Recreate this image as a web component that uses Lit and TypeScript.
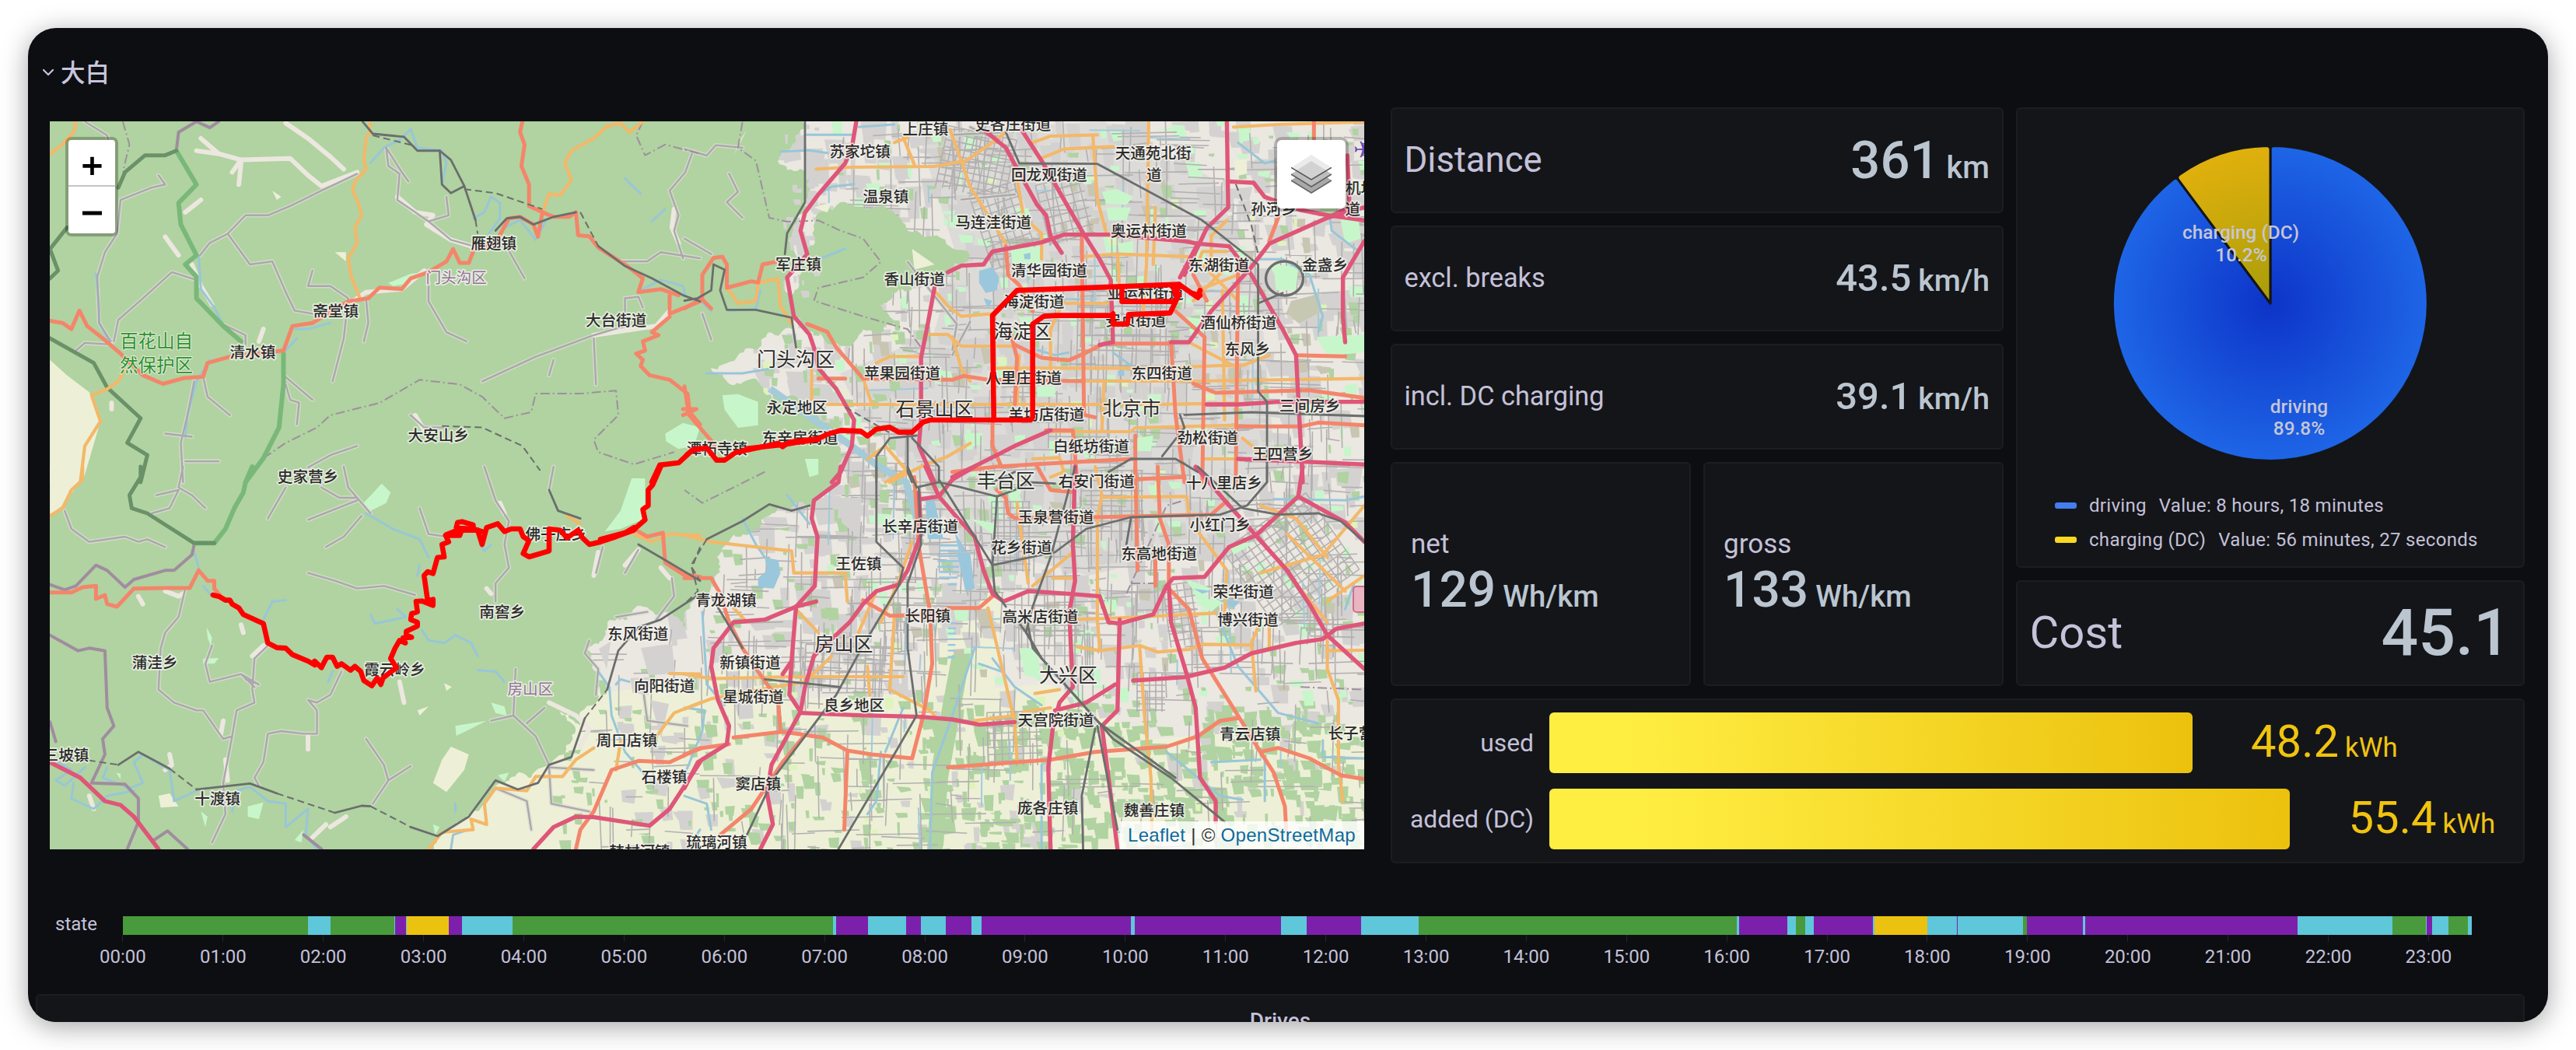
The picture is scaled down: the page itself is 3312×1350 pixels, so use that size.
import { LitElement, html, svg, css } from "lit";
import { customElement, property } from "lit/decorators.js";

type Pt = [number, number];
type Kind = "M" | "T" | "O" | "R" | "D" | "G" | "W" | "V" | "P" | "A" | "N" | "E";

/** The map is digitised in four sheets, each with its own offset and scale. */
interface Sheet {
  tx: number;
  ty: number;
  sx: number;
  sy: number;
  lines: Partial<Record<Kind, string[]>>;
  parks: string[];
  fields: string[];
  lakes: string[];
  labels: [string, number, number, string?][];
}

const S = 900 / 1568;

const SHEETS: Sheet[] = [
  {
    tx: 0, ty: 0, sx: S, sy: 620 / 1568,
    lines: {
      E: ["450,450 490,500 540,520 650,515 690,570 720,605 800,560", "540,520 520,560", "540,530 535,600", "490,500 440,490", "640,400 690,450 740,510 770,550", "890,640 930,690 970,700 955,730 1010,780 1055,800", "430,860 450,930 475,990", "770,1000 820,950 900,940 950,880", "1510,680 1505,740 1520,790", "370,770 400,830", "1500,1010 1470,1060 1330,1090", "415,690 450,650", "590,1070 580,1110", "250,1310 250,1330", "930,1350 950,1400"],
      O: ["112,500 140,470 165,430 170,395", "830,395 828,430 820,450 815,520 820,550 795,590 790,620 800,650 810,700 795,740 800,790 780,840 787,900 805,965", "1440,395 1410,430 1390,400 1360,410 1330,450 1280,490 1265,530 1280,585 1255,635 1230,630 1218,680", "280,1200 265,1240 240,1265 205,1285 225,1370 190,1450 180,1568"],
      T: ["112,1043 140,1050 160,1070 178,1010 195,1060 230,1100 270,1150 320,1220 365,1248 410,1230 455,1225 465,1180 515,1160 635,1140 655,1060 700,1050 780,980 825,970 850,935 900,940 920,905 960,885 1000,850 1015,810 1030,855 1050,855 1062,810 1110,790 1140,710 1165,705 1195,730 1205,770 1215,690 1240,705 1275,705 1290,690 1295,765 1320,768 1340,805 1400,860 1440,905 1430,950 1480,940 1520,960", "1170,395 1165,430 1175,470 1168,540 1185,600 1185,670 1215,690", "1500,960 1500,1020 1568,980", "1500,1030 1460,1080 1475,1090 1440,1110 1445,1140 1425,1150 1440,1170 1435,1190 1455,1220 1500,1235 1540,1280 1545,1340 1568,1380", "1530,1330 1560,1330 1530,1350"],
      R: ["812,395 835,435 905,445 935,490 985,490 1010,520 1040,605 1065,715", "985,490 990,600 1010,628 1040,605", "1110,750 1135,710 1165,705 1195,730 1240,705 1290,690", "1340,800 1400,865 1460,905 1530,960 1568,980"],
      D: ["835,440 930,475", "1040,615 1110,628 1215,680", "1300,690 1340,800", "1065,715 1070,760", "990,1385 1080,1390 1170,1450 1210,1530"],
      W: ["830,530 860,480 895,455 920,420 935,480 990,490 1000,530 990,600", "1060,710 1085,690 1100,640 1120,660 1120,710 1095,760", "245,1110 222,1050 222,1000 215,890", "445,830 450,940 480,1000 500,1055", "415,1420 420,1350 440,1240 470,1170", "660,1070 690,1070 740,1050", "1400,580 1435,630", "1130,740 1165,715 1200,780 1222,720", "1440,940 1480,910 1530,930 1535,960", "640,1140 665,1100", "1460,720 1490,680"],
      G: ["255,1110 265,1040 320,970 385,885 440,910", "248,1110 222,1050 218,900 235,820 262,760 270,650 340,610 370,600 355,570", "448,830 470,790 510,760 550,700 600,700 650,670 720,620 800,565", "510,760 560,860 610,850 640,950 660,1010 700,1020", "865,480 870,540 895,565 890,650 960,720 1010,780 1060,800", "700,880 690,930 740,930 780,970 770,1100 745,1240", "960,920 960,980 1000,1080 1045,1110", "1440,1000 1430,965 1400,970 1400,1060 1330,1090 1200,1160 1080,1240", "820,970 825,1050 815,1110", "500,1055 550,1090 550,1120", "410,1568 405,1440 420,1350 435,1240", "640,1250 650,1300 670,1310 665,1380", "635,1220 700,1300", "1550,500 1535,560 1500,620 1520,700 1510,750 1530,840", "170,1140 190,1115 250,1120", "455,1225 465,1290 515,1350", "1390,850 1450,850 1480,820 1568,840", "865,480 900,560 915,590", "1000,640 1005,700 960,720", "1130,790 1175,905", "1240,1170 1230,1220", "1330,1100 1335,1250", "690,1520 740,1480 800,1450", "920,1350 950,1390 1000,1390", "190,395 240,440 250,500", "370,1410 430,1420", "415,1500 490,1500"],
      V: ["490,395 470,415 440,395 400,430 395,490"],
      A: ["590,1490 640,1440 710,1390 740,1350 850,1310 940,1235 1030,1250 1080,1290 1130,1360 1190,1340 1200,1280 1300,1280 1380,1270 1385,1350 1330,1430 1340,1470 1420,1510 1510,1470", "1440,395 1425,440 1445,505 1490,470 1568,500", "275,395 290,470 275,560"],
      N: ["395,490 370,505 325,505 280,560 265,610", "150,740 112,810 130,880 112,905", "112,1100 210,1180 240,1260 315,1360 285,1440 330,1480 315,1568"],
      P: ["395,490 440,600 400,660 405,730 440,830 415,860 440,900 440,970 500,1060 540,1110", "635,1150 635,1250 625,1390 590,1490 550,1568"],
    },
    parks: ["870,920 920,890 950,885 905,925 880,930", "1490,1410 1530,1375 1568,1390 1555,1450 1520,1460 1492,1435"],
    fields: ["112,1170 150,1220 200,1275 225,1370 185,1568 112,1568", "750,820 775,820 775,850", "610,620 630,640 620,650"],
    lakes: [],
    labels: [["雁翅镇", 1106, 792], ["斋堂镇", 752, 1012], ["清水镇", 566, 1145], ["大台街道", 1380, 1042], ["大安山乡", 982, 1416], ["史家营乡", 690, 1551], ["门头沟区", 1022, 903, "district"], ["百花山自", 350, 1108, "reserve"], ["然保护区", 350, 1188, "reserve"]],
  },
  {
    tx: 880, ty: 140, sx: S, sy: 1 / 3,
    lines: {
      G: ["0,155 50,180 70,140 130,150", "100,250 120,320 95,360 130,420", "40,790 60,890", "640,70 700,120", "600,100 720,90", "500,590 610,830 600,930", "0,500 60,560", "620,350 740,330", "640,820 600,950"],
      O: ["295,232 370,225 560,222 630,200 690,130 720,90", "490,110 515,215", "470,130 500,110", "595,80 620,200 640,300 720,520", "780,130 820,105 925,100", "800,190 850,155 960,145", "740,220 760,420 800,480 800,580", "915,105 925,350 945,480", "1040,48 1035,600 1025,840", "890,570 970,560 1130,570", "690,1000 1060,1000 1200,990 1250,990 1310,950", "890,1050 1140,1050 1523,1040", "320,1140 1050,1140 1240,1135", "430,980 460,955 530,955", "550,870 590,870 620,915 740,915", "820,1245 1000,1245 1010,1230 1240,1220", "1150,600 1160,550 1215,550", "1150,700 1240,640", "1160,600 1240,740", "1220,600 1140,740", "1230,70 1330,60 1523,50", "1215,430 1180,490 1180,600", "855,750 950,750", "850,740 820,850 820,1050", "285,1000 285,1120", "1205,700 1210,1200", "940,1050 935,1240", "1055,380 1050,600", "560,700 590,760 620,800 690,790", "600,880 620,1000 640,1050", "165,670 210,655 215,760 240,830", "95,690 120,750 160,740 165,670", "400,1040 420,1140", "460,1440 530,1380 590,1340 640,1290", "780,1350 840,1345 850,1400 820,1420", "1160,1350 1300,1350", "1250,1270 1300,1340", "1130,900 1240,1000", "970,560 975,700", "410,1350 450,1300 500,1400 520,1440", "750,950 745,1140"],
      T: ["0,770 40,730 40,640 65,575 85,570 95,600 95,690 150,665 165,670 175,600 205,590", "275,830 320,860 340,920 400,1040 600,1045 625,1030 680,1045 890,1050", "40,735 60,770", "720,530 725,640 750,680 780,780", "890,480 895,1180 920,1190", "740,910 800,960 860,970 900,940 940,905 1090,905", "1100,780 1165,880 1160,1440", "1240,600 1235,1440", "1410,50 1410,130", "1330,420 1310,510", "1140,1060 1190,1095 1300,1090 1400,1085 1523,1115", "1240,1225 1380,1225 1420,1210 1523,1220", "1370,950 1480,955", "0,1070 10,1180 60,1280 70,1310", "690,1200 690,1300 710,1380", "600,1400 700,1380 790,1370 900,1360 1010,1350", "1090,900 1100,1180 1120,1440", "810,1240 870,1240 880,1440", "1140,640 1170,740", "725,830 745,960 740,1140", "1010,1260 1010,1440", "300,1040 360,1040"],
      R: ["720,90 750,210 925,212 1160,430 1285,600 1285,1090 1305,1130 1305,1440", "0,740 30,730 60,700 65,600 90,620 80,700 95,775 160,775 240,805 250,920", "1120,1180 1270,1170 1523,1185", "950,1400 1000,1350 1100,1350 1150,1400", "1070,1340 1120,1230 1110,1180", "430,1440 430,1340 460,1270 520,1260", "500,1260 500,1400 510,1440", "510,1270 570,1380 570,1440", "270,50 270,360 230,480 225,560", "690,1440 740,1400", "1285,750 1340,710"],
      D: ["1235,290 1270,450 1285,560", "360,1150 460,1250"],
      M: ["385,48 375,150 360,210 300,330 270,400 260,470 275,560 230,650 245,800 280,870 290,920 300,1000 340,1080 380,1200 375,1300 350,1400 330,1440", "670,80 720,150 745,230 790,370 810,410 820,490 845,555", "755,80 800,200 890,470 930,580 955,660 960,900 930,910", "590,630 620,605 670,600 690,550 800,515 850,485 950,485 1120,510 1150,520 1220,530 1270,640 1340,850 1370,950 1385,1440", "1215,48 1218,380 1170,460 1120,640", "1220,280 1275,285 1300,340 1380,390 1440,410 1523,430", "1523,380 1440,420 1310,520 1270,610 1180,780 1130,900 1090,900", "1523,510 1475,650 1475,800 1480,900", "1485,180 1490,380 1440,420", "560,690 545,830 530,960 530,1200 525,1300 560,1440", "1170,1140 1240,1140 1330,1130 1523,1130", "600,1420 660,1370 740,1300 820,1240", "1240,1350 1380,1360 1523,1372", "1110,650 1150,520"],
      A: ["130,50 120,150 160,200 190,420 230,435 300,430 350,470 400,500 440,590 400,650 300,690 290,740 400,800 500,850 530,920"],
      W: ["215,165 280,160 320,170", "270,100 380,100", "300,330 330,300 380,290", "1280,580 1340,580 1400,640 1430,800 1420,860", "1445,410 1450,470 1510,550", "300,580 360,540", "50,1020 130,1020 200,1000", "790,930 830,950 860,940", "1240,130 1300,210 1320,200", "30,730 60,780", "100,780 160,770 170,700", "960,940 1000,990", "390,70 470,60"],
    },
    parks: ["935,320 970,310 1005,340 990,370 945,365", "85,1105 120,1100 165,1130 165,1220 120,1230 90,1160", "270,1350 300,1350 300,1410 280,1420", "730,540 800,530 800,600 735,595", "970,520 1005,510 1005,560 980,570", "1470,430 1510,420 1515,500 1480,520", "1320,600 1375,610 1370,700 1325,700", "1415,880 1523,870 1523,940 1440,950", "945,380 1000,380 990,430 950,430", "1010,1270 1050,1260 1045,1320 1012,1320", "790,1070 830,1070 830,1110 790,1110"],
    fields: ["1230,200 1260,195 1260,250 1235,260", "510,540 560,600 515,620", "290,380 330,360 320,400", "140,80 110,180 125,120"],
    lakes: ["660,625 690,610 705,650 700,700 675,710 660,670", "970,1010 985,1005 985,1030 972,1030", "760,560 775,555 775,580 762,580", "670,730 690,740 680,770"],
    labels: [["上庄镇", 540, 77], ["史各庄街道", 736, 60], ["苏家坨镇", 393, 165], ["温泉镇", 451, 340], ["回龙观街道", 817, 255], ["天通苑北街", 1050, 170], ["道", 1052, 255], ["马连洼街道", 692, 437], ["奥运村街道", 1040, 472], ["东湖街道", 1197, 602], ["金盏乡", 1435, 604], ["孙河乡", 1320, 388], ["机场", 1515, 305], ["道", 1497, 388], ["军庄镇", 255, 600], ["香山街道", 515, 658], ["清华园街道", 817, 625], ["亚运村街道", 1033, 712], ["海淀街道", 783, 743], ["安贞街道", 1011, 815], ["海淀区", 757, 857, "city"], ["酒仙桥街道", 1241, 825], ["东风乡", 1261, 927], ["门头沟区", 249, 965, "city"], ["苹果园街道", 488, 1020], ["八里庄街道", 760, 1038], ["东四街道", 1069, 1020], ["石景山区", 560, 1157, "city"], ["北京市", 1002, 1152, "city"], ["永定地区", 252, 1153], ["羊坊店街道", 811, 1180], ["三间房乡", 1401, 1145], ["东辛房街道", 259, 1270], ["潭柘寺镇", 73, 1312], ["劲松街道", 1172, 1270], ["白纸坊街道", 911, 1302], ["王四营乡", 1340, 1332]],
  },
  {
    tx: 0, ty: 600, sx: S, sy: 1 / 3,
    lines: {
      E: ["540,610 545,640", "590,690 565,730", "370,480 400,500 410,490", "310,500 320,530", "500,980 495,1030", "690,1040 690,1090", "505,1130 510,1210", "380,1110 385,1150 370,1170", "730,1380 700,1430", "775,1350 740,1390", "895,830 905,910", "1230,910 1290,960 1320,1010 1300,1080", "1340,330 1330,420", "1400,380 1430,320", "1480,390 1500,430", "200,1270 210,1320", "1120,140 1130,180", "1090,470 1100,490"],
      G: ["415,470 400,580 370,640 360,700 355,860 390,910 440,940 455,940 500,1050 520,1040 500,1220 505,1340 475,1450", "600,690 570,740 565,860 570,910 530,940 520,1040", "475,690 460,760 470,830 540,800 570,850", "765,790 740,880 710,910 690,900 710,940 710,1030 680,1030 630,1020 600,1030 590,1140 570,1200 580,1230", "820,1050 860,1150 870,1210 835,1300", "870,1210 920,1155", "1085,0 1110,130 1140,210 1130,300 1140,390 1110,450 1110,520", "1155,780 1150,960 1200,1040 1230,1150", "940,160 960,260 1000,270", "690,410 750,440 800,470 860,460 930,495", "770,0 780,80 830,180", "640,80 620,140 600,200", "720,80 760,120 800,120", "690,205 800,130", "810,190 770,270 730,310", "145,170 160,240 200,290 280,270 310,290 330,280 370,310", "410,0 400,80 430,110 460,160", "400,90 380,160 340,180", "400,90 350,110", "1505,430 1510,500 1470,590", "1240,0 1230,90", "1350,310 1335,410", "1430,320 1400,410", "1320,670 1310,720 1340,780 1335,880", "1150,960 1100,980", "1180,990 1220,930", "1380,580 1450,560", "1110,1240 1180,1290 1190,1400", "1230,1160 1235,1300 1320,1330", "1330,1170 1230,1160", "1440,850 1450,980 1540,1000", "540,800 580,840 550,820"],
      O: ["185,0 185,50 160,90 140,160 112,190", "960,1475 990,1410 1060,1400 1055,1360 1090,1380 1085,1300 1110,1240 1180,1250 1200,1195 1260,1195 1290,1130 1330,1085", "1390,1060 1380,1170", "1470,1040 1510,950 1568,910", "1500,798 1568,800", "1420,260 1460,290 1500,260 1568,265", "1270,190 1300,220"],
      T: ["112,485 160,485 185,465 215,460 215,510 235,495 240,530 262,540 300,470 370,468 425,468 445,400 465,440 480,440 480,470 492,495", "1430,250 1450,270 1485,255 1490,370 1530,415 1568,425", "1290,1475 1300,1400 1330,1330 1370,1170 1430,1135 1500,1140 1568,1085"],
      R: ["265,1150 310,1100 380,1165", "440,1245 560,1222 620,1260", "750,1335 810,1308 830,1310", "920,1390 980,1425 1050,1350 1110,1210 1160,1245 1205,1220 1230,1150 1280,1120 1310,970", "1360,860 1385,710 1430,620 1480,590 1560,500", "1230,90 1250,170 1300,200", "1430,300 1480,350 1568,440"],
      D: ["150,1120 265,1150", "380,1165 440,1245", "620,1260 750,1335", "830,1310 920,1390", "1310,970 1360,860", "1568,310 1550,390 1568,440"],
      M: ["112,1140 180,1200 235,1290 270,1305 300,1350 355,1475", "1195,1475 1240,1390 1290,1350 1330,1352 1455,1385 1500,1320 1568,1140"],
      V: ["112,455 145,475 170,460 215,380 240,400 280,465 300,435 370,400 390,400 430,340 435,300", "112,650 175,710 200,700 235,710 240,930 255,1000 230,1050 235,1110 205,1220 280,1225 310,1280 310,1370 285,1475", "345,1440 375,1405 420,1475", "680,1420 720,1475", "112,985 125,1060"],
      N: ["315,0 315,40 290,110 295,160 330,180 435,295 480,295"],
      P: ["435,295 480,295 505,240 525,160 545,100 550,60 565,0"],
      W: ["130,1140 160,1170 125,1210 145,1230 190,1160", "240,1160 230,1200 290,1240 320,1220 300,1140 320,1110 380,1170 390,1290 440,1250", "160,1280 165,1220", "160,1280 210,1320 240,1270 300,1250", "520,1330 530,1250 560,1235 600,1290 640,1300 640,1390 690,1320 685,1420 710,1475", "590,590 610,520 640,515", "830,570 840,605 910,580 890,550", "945,630 960,670 995,680 1020,650 1055,680 1070,730", "1070,785 1110,790 1130,830", "820,180 880,240 940,280 960,350", "1075,300 1085,325 1100,300", "1340,790 1365,850 1370,960 1400,1100 1450,1200", "435,330 445,390", "455,460 470,490", "745,790 735,830", "940,380 935,420", "1020,1300 1020,1330", "1380,840 1390,820 1410,830", "1540,1475 1568,1400", "1010,1475 1015,1420 1050,1400"],
    },
    parks: ["855,65 875,100 865,140 825,175 812,145", "1415,45 1445,45 1445,200 1390,240 1355,250 1390,170", "463,620 475,660 472,690 465,660", "455,740 490,738 480,760 455,760", "555,1310 590,1295 580,1360 555,1350", "1020,1000 1090,980 1050,1015 1022,1038", "1100,910 1130,925 1135,960 1110,950", "1115,1190 1140,1180 1130,1215", "260,1180 270,1185 270,1205", "450,1330 465,1350 460,1390", "970,1380 985,1390 975,1420", "660,1440 680,1400 675,1450"],
    fields: ["1010,1080 1050,1110 1040,1170 1000,1255 970,1220 990,1130", "995,835 1012,850 1000,865", "355,1270 380,1260 400,1310 360,1315", "112,0 185,0 170,80 140,150 112,185", "935,940 960,925 940,960"],
    lakes: [],
    labels: [["佛子庄乡", 1245, 262], ["南窖乡", 1125, 560], ["东风街道", 1429, 645], ["向阳街道", 1488, 847], ["霞云岭乡", 884, 783], ["房山区", 1188, 857, "district"], ["蒲洼乡", 347, 755], ["周口店镇", 1404, 1057], ["石楼镇", 1488, 1197], ["三坡镇", 148, 1113], ["十渡镇", 487, 1280], ["韩村河镇", 1433, 1484]],
  },
  {
    tx: 880, ty: 600, sx: S, sy: 1 / 3,
    lines: {
      O: ["0,265 60,290 110,300 240,325 245,410 360,410 365,520", "745,140 770,450", "920,0 935,110 925,200 925,590 930,700", "935,118 1125,115 1130,190", "680,545 740,985 745,1130", "0,800 60,818 240,810 490,810", "410,770 415,880", "470,580 460,860 550,940 560,960", "650,980 740,960", "870,590 950,585 1190,565", "880,695 930,710 1020,690 1060,715 1130,705 1160,685 1270,688", "1150,250 1215,400 1210,560", "1290,150 1370,200 1440,350", "1523,150 1430,340 1290,410", "1350,260 1480,480", "1290,600 1270,680 1280,865", "1440,650 1440,780 1465,900 1465,1150 1475,1290", "1020,700 1030,950 1045,1200 1048,1475", "250,550 300,640", "0,935 60,895 200,850 270,830 330,730", "870,330 780,460", "430,480 390,640", "510,290 480,440 440,600", "1440,520 1523,420", "1360,430 1440,600", "785,875 840,860", "820,930 760,945", "1440,710 1523,708", "450,60 500,10", "825,430 875,430", "1310,600 1310,700", "110,545 140,600"],
      T: ["515,40 525,310 550,560 555,760 535,960 510,1125 420,1110 365,1095 310,1045 220,1022 110,1045", "365,1095 358,1400", "0,1110 40,1085 100,1070", "590,1160 820,1130 920,1100 1080,1080 1150,1040 1200,980 1240,970", "1010,0 1015,400", "1060,0 1065,200 1085,300 1085,470 1130,550 1160,740 1240,960 1290,1100 1320,1180 1345,1310 1348,1400", "1290,1100 1330,1085 1400,1125 1470,1190 1523,1205", "700,90 720,120 725,180 740,198 920,195 1180,185 1210,140", "400,515 460,575 560,570 590,545 660,545 690,500", "0,430 60,430 80,490 100,600 130,700 165,790 210,900 215,1020", "265,1045 220,1140 150,1320 80,1420", "790,0 820,90 870,98", "1015,48 1120,40", "1055,330 1055,460"],
      R: ["500,0 520,80 570,60 620,80 700,115 740,90 770,60 830,65", "430,0 430,290 490,390 480,460 400,690 340,880 200,1200 140,1420", "525,80 530,300 500,450 500,700 520,960 480,1080 345,1475", "570,50 690,380 695,480 720,540", "700,120 690,380 830,330 900,240 1000,195 1200,185 1260,150 1305,60 1305,0", "875,0 820,350 780,540 765,640 800,740 930,990 960,1050 1090,1200 1210,1370", "748,600 770,650 800,740", "768,600 780,700 930,990 1100,1200", "920,1010 890,1270 893,1475", "1150,0 1250,160 1330,185 1420,180 1470,210 1523,290", "50,280 130,210 190,145 240,170 280,150", "1000,200 990,300", "180,820 350,850", "60,500 130,700", "925,1000 970,1400"],
      D: ["50,280 15,380 30,480 0,530"],
      M: ["350,0 345,60 290,130 285,200 298,270 292,460 250,540 180,590 110,600 65,700 60,770 75,900 100,1000 95,1070 30,1140 0,1240", "295,520 250,540", "250,540 240,750 220,800", "240,750 235,880 260,945 195,1150 185,1260 198,1380 170,1475", "260,950 380,958 530,965 600,975 660,995 740,985", "830,940 900,910 965,840", "650,0 600,50 570,115 530,125", "525,100 530,260 500,400 480,455 430,480 400,530 370,600 290,730 270,850 260,945", "540,0 570,115 610,195 650,270 670,400 690,490 715,520 770,480 860,490 930,500 950,600 975,605 1050,570 1080,460 1095,430 1165,425 1220,310 1280,265 1375,115 1385,0", "875,0 870,300 875,440 862,560 870,850 840,910 825,1010 815,1160 820,1475", "975,590 970,940 935,1000 950,1200 970,1475", "1145,0 1210,130 1280,265 1350,400 1400,530 1440,650 1523,780", "1375,115 1480,215 1523,290", "1085,460 1090,600 1125,800 1145,930 1155,1200 1190,1290 1190,1370", "1005,825 1120,812 1210,775 1270,720 1370,680 1430,665 1460,625 1523,605"],
      W: ["0,930 45,940 40,1020 0,1190", "690,740 740,850 800,920", "1190,560 1240,770 1330,950 1420,990", "1080,1100 1200,1270 1250,1285", "1430,1055 1430,1120 1523,1125", "1320,125 1480,130 1523,115", "650,700 600,960 555,1180 550,1475", "660,760 710,790", "0,1270 50,1300 60,1400", "440,1100 430,1290 410,1340", "490,930 450,1100", "1290,1130 1180,1140", "130,200 160,300 180,350", "230,110 280,220", "1480,550 1500,450", "800,1150 800,1475", "1300,1130 1300,1290", "40,560 50,840 90,920"],
      V: [],
      A: ["180,20 40,140 0,90", "1000,450 1060,450", "1380,850 1523,860", "990,490 1080,150 1120,130"],
    },
    parks: ["750,700 790,700 800,830 760,790", "1120,430 1180,470 1150,500", "1140,520 1220,500 1180,560", "1220,300 1280,290 1230,340", "890,150 870,230 890,200", "640,200 700,220 690,260"],
    fields: ["640,0 650,0 650,10"],
    lakes: ["180,350 210,360 215,410 200,470 165,465 165,430 185,400", "540,130 560,130 580,280 545,280", "610,330 640,330 650,470 630,480", "605,250 630,320 615,330", "570,300 612,300 612,308 570,308", "570,320 612,320 612,328 570,328", "567,340 615,340 615,348 567,348", "567,360 615,360 615,368 567,368", "567,382 615,382 615,390 567,390", "570,402 615,402 615,410 570,410", "570,424 612,424 612,432 570,432", "590,450 610,450 610,458 590,458", "592,600 608,600 608,607 592,607", "590,620 608,620 608,627 590,627", "590,640 608,640 608,647 590,647", "590,662 607,662 607,669 590,669", "590,684 607,684 607,691 590,691", "590,706 606,706 606,713 590,713", "590,730 606,730 606,740 590,740", "1140,470 1180,480 1160,490", "1190,510 1245,520 1230,545"],
    labels: [["丰台区", 720, 52, "city"], ["右安门街道", 923, 58], ["十八里店乡", 1209, 62], ["玉泉营街道", 832, 195], ["长辛店街道", 528, 232], ["小红门乡", 1200, 224], ["花乡街道", 755, 312], ["东高地街道", 1063, 335], ["王佐镇", 390, 375], ["青龙湖镇", 93, 517], ["长阳镇", 545, 577], ["高米店街道", 797, 578], ["荣华街道", 1252, 482], ["博兴街道", 1262, 592], ["房山区", 357, 682, "city"], ["新镇街道", 147, 756], ["大兴区", 860, 802, "city"], ["星城街道", 154, 888], ["良乡地区", 380, 922], ["天宫院街道", 832, 977], ["青云店镇", 1267, 1032], ["长子营镇", 1510, 1030], ["窦店镇", 165, 1225], ["庞各庄镇", 814, 1318], ["魏善庄镇", 1052, 1325], ["琉璃河镇", 72, 1450]],
  },
];

const ROUTE: [number, string[]][] = [
  [2, ["477,495 490,500 505,515 515,515 520,530 535,545 545,570 590,605 600,680 620,698 640,700 655,725 690,750 705,765 705,750 720,775 732,735 745,735 755,770 765,760 785,785 795,770 808,790 815,825 833,845 845,815 853,840 858,815 888,775 875,740 885,700 895,670 908,680 903,660 922,658 910,650 910,635 935,615 935,600 920,590 922,567 935,560 932,520 945,518 970,535 970,512 958,518 950,420 958,405 970,412 980,350 995,348 990,300 1005,290 998,265 1030,265 1035,240 1022,235 1025,215 1035,212 1060,225 1060,245 1030,245 1070,245 1080,300 1090,235 1115,220 1130,250 1145,240 1165,240 1172,270 1185,285 1172,335 1185,348 1230,325 1230,240 1255,245 1270,275 1295,245 1305,275 1320,300 1345,290 1380,270 1420,245 1425,235 1445,205 1440,165 1452,150 1452,90 1462,70 1480,0", "1345,280 1400,255 1420,235", "1000,262 1035,238 1060,240 1080,250"]],
  [0, ["1460,1568 1478,1512 1520,1505 1550,1465 1568,1460"]],
  [1, ["5,1335 20,1313 50,1308 72,1355 90,1355 115,1325 210,1290 220,1303 235,1285 300,1272 320,1255 350,1240 395,1243 410,1262 430,1235 460,1228 480,1247 510,1247 535,1208 550,1200 775,1200 780,1190 780,830 805,800 830,797 955,797 960,790 960,830 992,830 995,793 1088,787 1108,715 1098,743 980,743 980,685", "693,1200 690,797 745,700 1108,677 1150,728 1155,700", "1108,677 1100,720 1095,685 1108,677", "140,1310 220,1295 300,1275", "1135,710 1155,720"]],
];

const FOREST: Pt[] = [[60, 150], [1035, 150], [1035, 165], [1023, 183], [1000, 207], [1029, 217], [1042, 243], [1020, 290], [1030, 330], [1012, 352], [1016, 380], [1030, 350], [1040, 318], [1050, 276], [1090, 262], [1127, 267], [1167, 297], [1247, 327], [1213, 353], [1155, 373], [1132, 393], [1155, 417], [1110, 423], [1085, 445], [1060, 420], [1040, 400], [1018, 423], [972, 450], [914, 473], [972, 487], [995, 517], [1050, 533], [1075, 570], [1075, 617], [1069, 630], [1046, 653], [989, 663], [955, 687], [937, 697], [920, 740], [891, 773], [880, 807], [861, 787], [827, 780], [781, 800], [752, 833], [769, 900], [746, 933], [700, 903], [740, 940], [712, 977], [683, 1000], [637, 1010], [574, 1067], [551, 1100], [60, 1100]];

/** Hills between the Yongding valley and Xiangshan. */
const HILLS: Pt[] = [[1046, 290], [1080, 270], [1127, 267], [1160, 294], [1240, 322], [1213, 350], [1160, 368], [1128, 392], [1150, 415], [1108, 423], [1085, 440], [1050, 425], [1024, 405], [1028, 360], [1042, 330]];

function random(seed: number): () => number {
  let s = seed;
  return () => {
    s = (s * 1664525 + 1013904223) % 4294967296;
    return s / 4294967296;
  };
}

function roughen(points: Pt[], depth: number, rnd: () => number): Pt[] {
  let current = points;
  for (let d = 0; d < depth; d++) {
    const next: Pt[] = [];
    current.forEach(([x, y], i) => {
      const [nx, ny] = current[(i + 1) % current.length];
      const len = Math.hypot(nx - x, ny - y);
      next.push([x, y]);
      if (len > 6 && len < 200) {
        const k = (rnd() - 0.5) * 0.55;
        next.push([(x + nx) / 2 + (ny - y) * k, (y + ny) / 2 - (nx - x) * k]);
      }
    });
    current = next;
  }
  return current;
}

const toPath = (pts: Pt[]) => "M" + pts.map(([x, y]) => x.toFixed(1) + " " + y.toFixed(1)).join("L") + "Z";

function blobs(seed: number, n: number, box: number[], size: [number, number]): string {
  const rnd = random(seed);
  let d = "";
  for (let i = 0; i < n; i++) {
    const x = box[0] + rnd() * (box[2] - box[0]);
    const y = box[1] + rnd() * (box[3] - box[1]);
    const w = size[0] + rnd() * (size[1] - size[0]);
    const h = size[0] + rnd() * (size[1] - size[0]);
    const k = (rnd() - 0.5) * w * 0.6;
    d += `M${x.toFixed(1)} ${y.toFixed(1)}l${w.toFixed(1)} ${(k * 0.3).toFixed(1)}l${(k * 0.5).toFixed(1)} ${h.toFixed(1)}l${(-w * 0.8).toFixed(1)} ${(k * 0.5).toFixed(1)}z`;
  }
  return d;
}

function streets(seed: number, n: number, box: number[]): string {
  const rnd = random(seed);
  let d = "";
  for (let i = 0; i < n; i++) {
    const x = box[0] + rnd() * (box[2] - box[0]);
    const y = box[1] + rnd() * (box[3] - box[1]);
    const len = 14 + rnd() * 70;
    const bend = (rnd() - 0.5) * 6;
    d += rnd() < 0.5 ? `M${x.toFixed(1)} ${y.toFixed(1)}l${len.toFixed(1)} ${bend.toFixed(1)}` : `M${x.toFixed(1)} ${y.toFixed(1)}l${bend.toFixed(1)} ${len.toFixed(1)}`;
  }
  return d;
}

/** A dense block of parallel streets, turned by an angle. */
function grid(cx: number, cy: number, w: number, h: number, step: number, angle: number) {
  let d = "";
  for (let x = -w / 2; x <= w / 2; x += step) d += `M${x} ${-h / 2}v${h}`;
  for (let y = -h / 2; y <= h / 2; y += step) d += `M${-w / 2} ${y}h${w}`;
  return svg`<path class="street" d=${d} transform="translate(${cx} ${cy}) rotate(${angle})"></path>`;
}

const DRAW_ORDER: Kind[] = ["E", "W", "G", "A", "V", "P", "N", "O", "T", "M", "R", "D"];

@customElement("route-map")
class RouteMap extends LitElement {
  static styles = css`
    :host { display: block; position: relative; width: 1690px; height: 936px; overflow: hidden; background: #ebe7e1; }
    .canvas { display: block; width: 1690px; height: 936px; }
    .line { fill: none; stroke-linejoin: round; stroke-linecap: round; vector-effect: non-scaling-stroke; }
    .E { stroke: #ece7df; stroke-width: 6; }
    .W { stroke: #98c6d8; stroke-width: 3; }
    .verge { stroke: #dcdcd0; stroke-width: 5.5; stroke-opacity: 0.75; }
    .G { stroke: #aaa8ac; stroke-width: 2.4; }
    .A { stroke: #9f8f9d; stroke-width: 2; stroke-dasharray: 12 4 2 4; stroke-linecap: butt; }
    .V { stroke: #a08c9f; stroke-width: 4; }
    .P { stroke: #79b878; stroke-width: 6; }
    .N { stroke: #6a9168; stroke-width: 5; }
    .O { stroke: #f3b869; stroke-width: 4.2; }
    .T { stroke: #f4856a; stroke-width: 5; }
    .M { stroke: #df5678; stroke-width: 5.4; }
    .R { stroke: #6b6e6d; stroke-width: 2.8; }
    .D { stroke: #6b6e6d; stroke-width: 2; stroke-dasharray: 9 5; stroke-linecap: butt; }
    .street { fill: none; stroke: #b2b0b0; stroke-width: 1.6; }
    .stream { fill: none; stroke: #a2cbdb; stroke-width: 2; }
    .built { fill: #d4d2d0; }
    .core { fill: #d6d4d2; opacity: 0.65; }
    .campus { fill: #c8c5b2; }
    .wood { fill: #b0d3a1; }
    .garden { fill: #c8f6cb; }
    .meadow { fill: #dff3bd; }
    .farm { fill: #edf0d6; }
    .lake { fill: #9ac7dc; }
    .river { fill: none; stroke: #a5cbd8; stroke-width: 9; }
    .reservoir { fill: #c6c8b2; }
    .test-ring { fill: none; stroke: #6b6e6d; stroke-width: 3.4; }
    .route { fill: none; stroke: #ff0000; stroke-width: 6.6; stroke-linejoin: round; stroke-linecap: round; vector-effect: non-scaling-stroke; }
    .label { font-family: "Noto Sans CJK SC", "Noto Sans", sans-serif; font-size: 19.6px; font-weight: 500; fill: #2b2b2b; stroke: rgba(244, 243, 238, 0.8); stroke-width: 3.5px; stroke-linejoin: round; paint-order: stroke; text-anchor: middle; dominant-baseline: central; }
    .city { font-size: 25px; font-weight: 400; }
    .district { fill: #93709a; font-weight: 400; }
    .reserve { font-size: 23.5px; font-weight: 400; fill: #2d922d; stroke-width: 2px; }
    .plane { font-family: "DejaVu Sans", sans-serif; font-size: 30px; fill: #6a4fb5; }
    .shield { fill: #eab4c2; stroke: #cf6f8b; stroke-width: 2; }
    .zoom { position: absolute; left: 20px; top: 20px; border: 4px solid rgba(0, 0, 0, 0.25); border-radius: 8px; }
    .zoom-button { display: block; box-sizing: border-box; width: 60px; height: 60px; background: #fff; }
    .zoom-button:first-child { border-bottom: 2px solid #c4c4c4; border-radius: 4px 4px 0 0; }
    .zoom-button:last-child { border-radius: 0 0 4px 4px; }
    .layers { position: absolute; right: 20px; top: 20px; border: 4px solid rgba(0, 0, 0, 0.22); border-radius: 10px; }
    .layers-button { display: flex; align-items: center; justify-content: center; width: 88px; height: 88px; border-radius: 6px; background: #fff; }
    .credit { position: absolute; right: 0; bottom: 0; box-sizing: border-box; width: 314px; height: 36px; padding-left: 10px; background: rgba(255, 255, 255, 0.8); font: 24px/35px "Liberation Sans", Helvetica, sans-serif; letter-spacing: 0.3px; color: #333; white-space: pre; }
    .link { color: #0f6a9c; }
  `;

  private sheetTransform(s: Sheet) {
    return `translate(${s.tx} ${s.ty}) scale(${s.sx} ${s.sy})`;
  }

  private areas(list: "parks" | "fields" | "lakes", cls: string) {
    return SHEETS.map((s) => svg`<g transform=${this.sheetTransform(s)}>${s[list].map((p) => svg`<polygon class=${cls} points=${p}></polygon>`)}</g>`);
  }

  private lines(kind: Kind, cls: string) {
    return SHEETS.map((s) => svg`<g transform=${this.sheetTransform(s)}>${(s.lines[kind] ?? []).map((p) => svg`<polyline class="line ${cls}" points=${p}></polyline>`)}</g>`);
  }

  render() {
    const rnd = random(11);
    const forest = toPath(roughen(FOREST, 4, rnd));
    const hills = toPath(roughen(HILLS, 4, rnd));
    return html`
      <svg class="canvas" viewBox="64 156 1690 936">
        <path class="farm" d="M700 900L860 880L1000 840L1040 1092L540 1092ZM1000 900L1350 880L1480 950L1754 930L1754 1092L1000 1092ZM1190 760L1290 760L1260 1092L1180 1092Z"></path>
        <path class="core" d="M1180 170L1420 156L1560 230L1620 380L1640 600L1560 700L1400 740L1240 700L1170 600L1110 540L1080 480L1200 430L1230 330Z"></path>
        <path class="built" d=${blobs(3, 760, [960, 150, 1754, 830], [6, 36])}></path>
        <path class="built" d=${blobs(5, 190, [780, 780, 1754, 1090], [5, 26])}></path>
        <path class="campus" d=${blobs(7, 80, [1060, 150, 1754, 900], [6, 20])}></path>
        <path class="wood" d=${blobs(17, 330, [900, 600, 1754, 1092], [3, 17])}></path>
        <path class="wood" d=${blobs(19, 360, [1180, 900, 1754, 1092], [3, 22])}></path>
        <path class="wood" d=${blobs(23, 110, [700, 860, 1180, 1092], [3, 18])}></path>
        <path class="wood" d=${blobs(29, 150, [1050, 156, 1754, 600], [3, 16])}></path>
        <path class="garden" d=${blobs(31, 210, [1060, 156, 1754, 900], [4, 20])}></path>
        <path class="meadow" d=${blobs(37, 60, [900, 156, 1754, 1092], [4, 14])}></path>
        <path class="wood" d="M1248 840L1232 930L1219 1000L1212 1092L1192 1092L1199 980L1213 900L1224 842Z"></path>
        ${grid(1255, 210, 90, 80, 9, 12)} ${grid(1290, 290, 60, 100, 10, -18)} ${grid(1370, 270, 60, 80, 11, -14)}
        ${grid(1660, 720, 130, 120, 10, -35)} ${grid(1090, 860, 110, 60, 11, 2)} ${grid(1305, 950, 70, 70, 9, -2)} ${grid(1480, 890, 36, 50, 8, 0)}
        ${grid(1300, 690, 50, 90, 8, 0)} ${grid(1430, 650, 80, 90, 13, 0)} ${grid(1450, 440, 130, 130, 19, 1)} ${grid(1520, 790, 40, 80, 9, -8)} ${grid(1360, 810, 60, 90, 13, 0)}
        <path class="street" d=${streets(41, 760, [1080, 150, 1754, 820])}></path>
        <path class="street" d=${streets(43, 230, [740, 800, 1754, 1092])}></path>
        <path class="street" d=${streets(47, 110, [900, 580, 1180, 860])}></path>
        <path class="stream" d=${streets(53, 42, [1000, 160, 1754, 1080])}></path>
        <path class="wood" d=${forest}></path>
        <path class="wood" d=${hills}></path>
        <path class="built" d=${blobs(59, 26, [1000, 160, 1060, 400], [3, 12])}></path>
        <path class="wood" d=${blobs(61, 50, [960, 400, 1160, 640], [4, 18])}></path>
        <path class="built" d="M824 833L864 828L868 866L834 868ZM770 834L785 825L780 860ZM836 900L860 905L850 950ZM1080 640L1108 640L1105 690L1082 672Z"></path>
        <path class="river" d="M990 500L1090 570L1130 600L1165 620L1185 690"></path>
        <path class="reservoir" d="M1660 387L1695 378L1700 400L1670 416L1654 402Z"></path>
        ${this.areas("fields", "farm")} ${this.areas("parks", "garden")} ${this.areas("lakes", "lake")}
        ${this.lines("G", "verge")}
        ${DRAW_ORDER.map((kind) => this.lines(kind, kind))}
        <ellipse class="test-ring" cx="1651.5" cy="358" rx="24" ry="22"></ellipse>
        <text class="plane" x="1740" y="203">✈</text>
        <rect class="shield" x="1740" y="754" width="30" height="33" rx="4"></rect>
        ${SHEETS.map((s) => s.labels.map(([name, x, y, cls]) => svg`<text class="label ${cls ?? ""}" x=${s.tx + x * s.sx} y=${s.ty + y * s.sy - 1.5}>${name}</text>`))}
        ${ROUTE.map(([i, parts]) => svg`<g transform=${this.sheetTransform(SHEETS[i])}>${parts.map((p) => svg`<polyline class="route" points=${p}></polyline>`)}</g>`)}
      </svg>
      <div class="zoom">
        <svg class="zoom-button" viewBox="0 0 60 60"><path d="M18 34.500H43M30.500 22.500V46.500" stroke="#000" stroke-width="4.800"></path></svg>
        <svg class="zoom-button" viewBox="0 0 60 60"><path d="M18 34H43" stroke="#000" stroke-width="5"></path></svg>
      </div>
      <div class="layers">
        <div class="layers-button">
          <svg width="52" height="52" viewBox="0 0 52 52">
            <path d="M0 34L26 50L52 34L42 27L10 27Z" fill="#a9a9a9"></path><path d="M0 34L26 50L52 34" fill="none" stroke="#666" stroke-width="1.500"></path>
            <path d="M0 26L26 42L52 26L42 19L10 19Z" fill="#bdbdbd"></path><path d="M0 26L26 42L52 26" fill="none" stroke="#606060" stroke-width="1.500"></path>
            <path d="M0 17.500L26 1L52 17.500L26 33Z" fill="#ebebeb"></path><path d="M7 21L26 9L45 21L26 33Z" fill="#d2d2d2"></path><path d="M0 17.500L26 33L52 17.500" fill="none" stroke="#505050" stroke-width="1.500"></path>
          </svg>
        </div>
      </div>
      <div class="credit"><span class="link">Leaflet</span> | © <span class="link">OpenStreetMap</span></div>
    `;
  }
}

@customElement("stat-panel")
class StatPanel extends LitElement {
  @property() label = "";
  @property() value = "";
  @property() unit = "";
  @property({ reflect: true }) size = "";

  static styles = css`
    :host { display: flex; box-sizing: border-box; align-items: center; justify-content: space-between; padding: 0 16px 0 15.5px; border: 2px solid #1c1d21; border-radius: 6px; background: #141519; --label: 34.300px; --value: 49px; --unit: 39.200px; }
    :host([size="large"]) { --label: 45.500px; --value: 67px; --unit: 39.800px; }
    :host([size="single"]) { --label: 58px; --value: 84px; }
    :host([size="stacked"]) { flex-direction: column; align-items: flex-start; justify-content: center; padding: 0 24px; --label: 35px; --value: 64px; --unit: 38.400px; }
    .label { color: #c4c1d8; font-size: var(--label); line-height: 1.2; }
    .reading { display: flex; align-items: baseline; gap: 9px; color: #bac5d0; font-weight: 500; font-size: var(--value); line-height: 1.2; }
    .unit { font-size: var(--unit); line-height: 1; }
  `;

  render() {
    return html`<span class="label">${this.label}</span>
      <span class="reading"><span>${this.value}</span>${this.unit ? html`<span class="unit">${this.unit}</span>` : ""}</span>`;
  }
}

@customElement("share-pie")
class SharePie extends LitElement {
  static styles = css`
    :host { display: flex; flex-direction: column; box-sizing: border-box; padding: 47px 48px 0; border: 2px solid #1c1d21; border-radius: 6px; background: #141519; }
    .pie { display: block; align-self: center; width: 406px; height: 406px; }
    .slice { stroke: #141519; stroke-width: 3; stroke-linejoin: round; }
    .caption { font: 500 24.400px Roboto, sans-serif; fill: #c6c6d6; text-anchor: middle; }
    .legend { display: flex; flex-direction: column; gap: 16px; margin-top: 43px; color: #c4c1d8; font-size: 24px; letter-spacing: 0.3px; line-height: 28px; }
    .entry { display: flex; align-items: center; }
    .swatch { width: 28px; height: 8px; margin-right: 16px; border-radius: 3px; }
    .driving { background: #447df0; }
    .charging { background: #f8d820; }
    .name { margin-right: 16px; }
  `;

  render() {
    return html`
      <svg class="pie" viewBox="-203 -203 406 406">
        <defs>
          <radialGradient id="blue" gradientUnits="userSpaceOnUse" cx="0" cy="0" r="201"><stop offset="0" stop-color="#0d34c8"></stop><stop offset="1" stop-color="#1e65e6"></stop></radialGradient>
          <radialGradient id="gold" gradientUnits="userSpaceOnUse" cx="0" cy="0" r="201"><stop offset="0" stop-color="#a89d0a"></stop><stop offset="1" stop-color="#e0b00d"></stop></radialGradient>
        </defs>
        <path class="slice" fill="url(#blue)" d="M0 0V-197.500Q0 -202.500 5 -202.500A202.500 202.500 0 1 1 -125 -159.500Q-121 -162.500 -118 -158.500Z"></path>
        <path class="slice" fill="url(#gold)" d="M0 0V-197.500Q0 -202.500 -5 -202.500A202.500 202.500 0 0 0 -117 -165.500Q-121 -162.500 -118 -158.500Z"></path>
        <text class="caption" x="-38" y="-83.500">charging (DC)</text>
        <text class="caption" x="-37.500" y="-54.500">10.2%</text>
        <text class="caption" x="37" y="141">driving</text>
        <text class="caption" x="37" y="169">89.8%</text>
      </svg>
      <div class="legend">
        <div class="entry"><span class="swatch driving"></span><span class="name">driving</span><span>Value: 8 hours, 18 minutes</span></div>
        <div class="entry"><span class="swatch charging"></span><span class="name">charging (DC)</span><span>Value: 56 minutes, 27 seconds</span></div>
      </div>
    `;
  }
}

@customElement("energy-bars")
class EnergyBars extends LitElement {
  private bars = [
    { label: "used", value: "48.2", width: 827, gap: 75 },
    { label: "added (DC)", value: "55.4", width: 952, gap: 75.5 },
  ];

  static styles = css`
    :host { display: flex; flex-direction: column; box-sizing: border-box; gap: 20px; padding: 16px; border: 2px solid #1c1d21; border-radius: 6px; background: #141519; }
    .row { display: flex; align-items: center; height: 78px; }
    .label { width: 166px; margin-right: 20px; color: #c4c1d8; font-size: 31.800px; line-height: 36px; padding-bottom: 1px; text-align: right; white-space: nowrap; }
    .bar { height: 78px; border-radius: 6px; background: linear-gradient(90deg, #ffee42 12%, #ecc10e 100%); }
    .value { display: flex; align-items: baseline; gap: 8px; padding-top: 3px; color: #f0c40f; font-size: 58px; line-height: 78px; }
    .unit { font-size: 34.800px; }
  `;

  render() {
    return this.bars.map(
      (b) => html`<div class="row">
        <span class="label">${b.label}</span>
        <span class="bar" style="width:${b.width}px;margin-right:${b.gap}px"></span>
        <span class="value"><span>${b.value}</span><span class="unit">kWh</span></span>
      </div>`
    );
  }
}

/** Start of each state on the 3020 px axis; the last entry closes it. */
const STATES: [number, string][] = [
  [158, "g"], [395.6, "b"], [425, "g"], [507, "b"], [508, "p"], [522, "b"], [523, "y"], [576.6, "p"], [594, "b"], [658.7, "g"], [1071, "b"], [1075, "p"],
  [1116, "b"], [1165, "p"], [1184, "b"], [1216, "p"], [1249, "b"], [1262, "p"], [1454, "b"], [1459, "p"], [1647, "b"], [1680, "p"], [1750, "b"], [1824, "g"],
  [2233, "b"], [2236, "p"], [2298, "b"], [2309, "g"], [2321, "b"], [2332, "p"], [2408, "b"], [2410, "y"], [2478, "b"], [2516, "p"], [2517, "b"], [2601, "g"],
  [2606, "p"], [2678, "b"], [2681, "p"], [2954, "b"], [3076, "g"], [3119, "b"], [3120, "p"], [3127, "b"], [3148, "g"], [3173, "b"], [3178, ""],
];

@customElement("state-timeline")
class StateTimeline extends LitElement {
  static styles = css`
    :host { display: flex; box-sizing: border-box; height: 136px; padding: 52px 0 0 25px; color: #c4c1d8; font-size: 24px; }
    .name { width: 87px; line-height: 21px; }
    .chart { display: flex; flex-direction: column; }
    .track { display: flex; width: 3020px; height: 24px; }
    .g { background: #489a3c; }
    .b { background: #5fc7da; }
    .p { background: #7c20ab; }
    .y { background: #ecc211; }
    .axis { display: flex; margin-left: -64.500px; }
    .hour { display: flex; flex: none; flex-direction: column; align-items: center; width: 128.900px; line-height: 28px; }
    .tick { width: 1px; height: 9px; margin-bottom: 5px; background: #25262b; }
  `;

  render() {
    const hours = Array.from({ length: 24 }, (_, i) => String(i).padStart(2, "0") + ":00");
    return html`<span class="name">state</span>
      <div class="chart">
        <div class="track">${STATES.slice(0, -1).map(([x, c], i) => html`<span class=${c} style="width:${STATES[i + 1][0] - x}px"></span>`)}</div>
        <div class="axis">${hours.map((h) => html`<span class="hour"><span class="tick"></span>${h}</span>`)}</div>
      </div>`;
  }
}

@customElement("app-root")
class AppRoot extends LitElement {
  static styles = css`
    :host { display: block; box-sizing: border-box; width: 3312px; height: 1350px; padding: 36px; background: #fff; font-family: Roboto, "Noto Sans CJK SC", sans-serif; overflow: hidden; }
    .window { display: flex; flex-direction: column; box-sizing: border-box; width: 3240px; height: 1278px; padding: 0 30px 0 10px; border-radius: 36px; overflow: hidden; background: #0d0e12; box-shadow: 0 6px 34px rgba(0, 0, 0, 0.36); }
    .heading { display: flex; align-items: center; height: 102px; flex: none; box-sizing: border-box; padding: 7px 0 0 8px; gap: 8px; color: #c8c5dc; font-size: 31.500px; font-weight: 500; }
    .chevron { margin-top: 4px; }
    .body { display: grid; flex: none; grid-template-columns: 1726px 386px 386px 654px; grid-template-rows: repeat(5, 136px) 212px; gap: 16px; }
    .map { grid-row: 1 / 7; padding: 18px; }
    .wide { grid-column: 2 / 4; }
    .net { grid-column: 2; grid-row: 4 / 6; }
    .gross { grid-column: 3; grid-row: 4 / 6; }
    .pie { grid-column: 4; grid-row: 1 / 5; }
    .cost { grid-column: 4; grid-row: 5; }
    .energy { grid-column: 2 / 5; grid-row: 6; }
    .timeline { flex: none; margin: 16px 0; }
    .drives { flex: none; height: 200px; box-sizing: border-box; padding-top: 17px; border: 2px solid #1c1d21; border-radius: 6px; background: #141519; color: #c4c1d8; font-size: 28px; font-weight: 500; line-height: 32px; text-align: center; }
  `;

  render() {
    return html`
      <main class="window">
        <header class="heading">
          <svg class="chevron" width="16" height="16" viewBox="0 0 16 16"><path d="M2 5L8 11L14 5" fill="none" stroke="#c8c5dc" stroke-width="2.200" stroke-linecap="round"></path></svg>
          <span>大白</span>
        </header>
        <section class="body">
          <div class="map"><route-map></route-map></div>
          <stat-panel class="wide" size="large" label="Distance" value="361" unit="km"></stat-panel>
          <stat-panel class="wide" label="excl. breaks" value="43.5" unit="km/h"></stat-panel>
          <stat-panel class="wide" label="incl. DC charging" value="39.1" unit="km/h"></stat-panel>
          <stat-panel class="net" size="stacked" label="net" value="129" unit="Wh/km"></stat-panel>
          <stat-panel class="gross" size="stacked" label="gross" value="133" unit="Wh/km"></stat-panel>
          <share-pie class="pie"></share-pie>
          <stat-panel class="cost" size="single" label="Cost" value="45.1"></stat-panel>
          <energy-bars class="energy"></energy-bars>
        </section>
        <state-timeline class="timeline"></state-timeline>
        <section class="drives">Drives</section>
      </main>
    `;
  }
}
